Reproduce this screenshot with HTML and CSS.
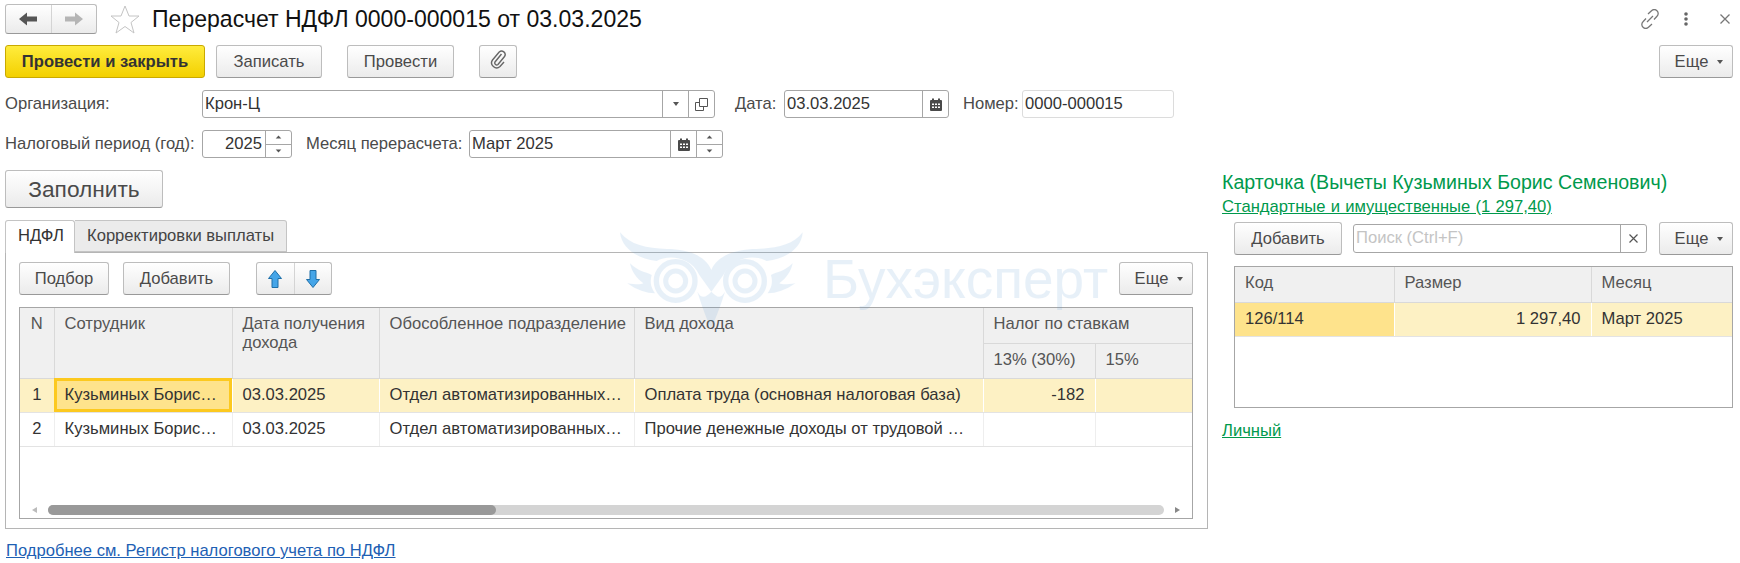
FILE: index.html
```html
<!DOCTYPE html>
<html lang="ru">
<head>
    <meta charset="UTF-8">
    <title>Перерасчет НДФЛ 0000-000015 от 03.03.2025</title>
    <link rel="stylesheet" href="styles.css">
</head>
<body>
    <svg class="defs" width="0" height="0">
        <symbol id="cal" viewBox="0 0 12 13">
            <path d="M1 2h1V0.500h2V2h4V0.500h2V2h1a1 1 0 0 1 1 1v9a1 1 0 0 1-1 1H1a1 1 0 0 1-1-1V3a1 1 0 0 1 1-1z" fill="#4a4a4a"/>
            <path d="M2 5.500h2v1.500H2zM5 5.500h2v1.500H5zM8 5.500h2v1.500H8zM2 8.500h2V10H2zM5 8.500h2V10H5zM8 8.500h2V10H8z" fill="#fff"/>
        </symbol>
        <symbol id="up" viewBox="0 0 8 5"><path d="M4 0.500L7.500 4.500H0.500z" fill="#555"/></symbol>
        <symbol id="down" viewBox="0 0 8 5"><path d="M4 4.500L0.500 0.500H7.500z" fill="#555"/></symbol>
    </svg>

    <!-- watermark lies over the form -->
    <div class="watermark">
        <svg class="owl" width="210" height="110" viewBox="0 0 630 330">
            <g fill="#5b9bd5">
                <path d="M30 22C60 60 110 70 170 72C230 72 285 90 304 135C323 90 380 72 440 72C500 70 550 60 578 22C575 70 530 100 470 108C440 90 370 90 340 150L304 200L268 150C240 90 170 90 140 108C80 100 35 70 30 22z"/>
                <path id="wing" d="M60 115C85 140 105 140 125 150C118 175 125 190 135 205C110 205 80 195 52 175C75 178 90 180 100 175C80 160 65 140 60 115z"/>
                <path transform="translate(608,0) scale(-1,1)" d="M60 115C85 140 105 140 125 150C118 175 125 190 135 205C110 205 80 195 52 175C75 178 90 180 100 175C80 160 65 140 60 115z"/>
                <path d="M262 200C275 240 285 270 303 310C322 270 332 240 345 200C330 225 320 215 304 200C290 215 275 225 262 200z"/>
            </g>
            <g fill="none" stroke="#5b9bd5">
                <circle cx="197" cy="168" r="30" stroke-width="15"/>
                <circle cx="405" cy="168" r="30" stroke-width="15"/>
                <circle cx="197" cy="168" r="58" stroke-width="16"/>
                <circle cx="405" cy="168" r="58" stroke-width="16"/>
            </g>
        </svg>
        <span class="watermark-text">Бухэксперт</span>
    </div>

    <div class="page">
        <header class="titlebar">
            <div class="nav-group">
                <button class="nav-btn">
                    <svg width="18" height="14" viewBox="0 0 18 14"><path d="M0 7L8 0.500V4.500H18V9.500H8V13.500z" fill="#555"/></svg>
                </button>
                <button class="nav-btn">
                    <svg width="18" height="14" viewBox="0 0 18 14"><path d="M18 7L10 0.500V4.500H0V9.500H10V13.500z" fill="#b5b5b5"/></svg>
                </button>
            </div>
            <svg class="star" width="30" height="29" viewBox="0 0 30 29"><path d="M15 1L19 11H29L21 17.500L24 28L15 21.500L6 28L9 17.500L1 11H11z" fill="#fff" stroke="#c4c4c4"/></svg>
            <h1 class="doc-title">Перерасчет НДФЛ 0000-000015 от 03.03.2025</h1>
            <div class="window-icons">
                <svg width="20" height="20" viewBox="0 0 20 20"><path d="M8 5L11.500 1.800a3.600 3.600 0 0 1 5.500 0a3.800 3.800 0 0 1 0 5.500L14 10.500M12 15L8.500 18.200a3.600 3.600 0 0 1-5.500 0a3.800 3.800 0 0 1 0-5.500L6 9.500M7 13L13 7" fill="none" stroke="#777" stroke-width="1.300"/></svg>
                <svg class="dots" width="6" height="14" viewBox="0 0 6 14"><circle cx="3" cy="2" r="1.800" fill="#666"/><circle cx="3" cy="7" r="1.800" fill="#666"/><circle cx="3" cy="12" r="1.800" fill="#666"/></svg>
                <svg width="10" height="10" viewBox="0 0 10 10"><path d="M0.500 0.500L9.500 9.500M9.500 0.500L0.500 9.500" stroke="#777" stroke-width="1.300"/></svg>
            </div>
        </header>

        <div class="commands">
            <button class="btn btn-primary">Провести и закрыть</button>
            <button class="btn btn-save">Записать</button>
            <button class="btn btn-post">Провести</button>
            <button class="btn btn-clip">
                <svg width="18" height="20" viewBox="0 0 18 20"><path d="M12.500 5L6 13a2 2 0 0 0 3 2.500L15.500 7.500a3.500 3.500 0 0 0-5.300-4.500L3.500 11a5 5 0 0 0 7.500 6.500L15 13" fill="none" stroke="#666" stroke-width="1.400"/></svg>
            </button>
            <button class="btn btn-more">Еще<i class="caret"></i></button>
        </div>

        <div class="form-row">
            <label class="lbl lbl-org">Организация:</label>
            <div class="field field-org">
                <span class="field-val">Крон-Ц</span>
                <span class="field-btn"><i class="caret"></i></span>
                <span class="field-btn">
                    <svg width="13" height="13" viewBox="0 0 13 13"><path d="M4.500 0.500H12.500V8.500H4.500zM4.500 4.500H0.500V12.500H8.500V8.500" fill="none" stroke="#555"/></svg>
                </span>
            </div>
            <label class="lbl lbl-date">Дата:</label>
            <div class="field field-date">
                <span class="field-val">03.03.2025</span>
                <span class="field-btn"><svg width="12" height="13"><use href="#cal"/></svg></span>
            </div>
            <label class="lbl lbl-num">Номер:</label>
            <div class="field field-num"><span class="field-val">0000-000015</span></div>
        </div>

        <div class="form-row form-row-2">
            <label class="lbl lbl-year">Налоговый период (год):</label>
            <div class="field field-year">
                <span class="field-val right">2025</span>
                <span class="spin"><b><svg width="7" height="4"><use href="#up"/></svg></b><b><svg width="7" height="4"><use href="#down"/></svg></b></span>
            </div>
            <label class="lbl lbl-month">Месяц перерасчета:</label>
            <div class="field field-month">
                <span class="field-val">Март 2025</span>
                <span class="field-btn"><svg width="12" height="13"><use href="#cal"/></svg></span>
                <span class="spin"><b><svg width="7" height="4"><use href="#up"/></svg></b><b><svg width="7" height="4"><use href="#down"/></svg></b></span>
            </div>
        </div>

        <div class="columns">
            <main class="left">
                <button class="btn btn-fill">Заполнить</button>
                <div class="tabs">
                    <span class="tab tab-active">НДФЛ</span>
                    <span class="tab">Корректировки выплаты</span>
                </div>
                <section class="panel">
                    <div class="toolbar">
                        <button class="btn btn-pick">Подбор</button>
                        <button class="btn btn-add">Добавить</button>
                        <div class="arrows">
                            <button class="arrow-btn">
                                <svg width="14" height="18" viewBox="0 0 14 18"><path d="M7 0.500L13.500 8.500H10V17.500H4V8.500H0.500z" fill="#45a5e8" stroke="#1f6fa8"/></svg>
                            </button>
                            <button class="arrow-btn">
                                <svg width="14" height="18" viewBox="0 0 14 18"><path d="M7 17.500L0.500 9.500H4V0.500H10V9.500H13.500z" fill="#45a5e8" stroke="#1f6fa8"/></svg>
                            </button>
                        </div>
                        <button class="btn btn-more">Еще<i class="caret"></i></button>
                    </div>

                    <div class="grid">
                        <table class="tbl tbl-main">
                            <colgroup>
                                <col class="c-n"><col class="c-emp"><col class="c-date"><col class="c-dep"><col class="c-kind"><col class="c-r13"><col class="c-r15">
                            </colgroup>
                            <thead>
                                <tr>
                                    <th rowspan="2" class="center">N</th>
                                    <th rowspan="2">Сотрудник</th>
                                    <th rowspan="2">Дата получения дохода</th>
                                    <th rowspan="2" class="nowrap">Обособленное подразделение</th>
                                    <th rowspan="2">Вид дохода</th>
                                    <th colspan="2">Налог по ставкам</th>
                                </tr>
                                <tr>
                                    <th>13% (30%)</th>
                                    <th>15%</th>
                                </tr>
                            </thead>
                            <tbody>
                                <tr class="selected">
                                    <td class="center">1</td>
                                    <td class="focus">Кузьминых Борис…</td>
                                    <td>03.03.2025</td>
                                    <td>Отдел автоматизированных…</td>
                                    <td>Оплата труда (основная налоговая база)</td>
                                    <td class="right">-182</td>
                                    <td></td>
                                </tr>
                                <tr>
                                    <td class="center">2</td>
                                    <td>Кузьминых Борис…</td>
                                    <td>03.03.2025</td>
                                    <td>Отдел автоматизированных…</td>
                                    <td>Прочие денежные доходы от трудовой …</td>
                                    <td></td>
                                    <td></td>
                                </tr>
                            </tbody>
                        </table>
                        <div class="scrollbar">
                            <i class="sb-left"></i>
                            <div class="sb-track"><div class="sb-thumb"></div></div>
                            <i class="sb-right"></i>
                        </div>
                    </div>
                </section>
                <a class="doc-link" href="#">Подробнее см. Регистр налогового учета по НДФЛ</a>
            </main>

            <aside class="right-col">
                <div class="card-title">Карточка (Вычеты Кузьминых Борис Семенович)</div>
                <a class="green-link" href="#">Стандартные и имущественные (1 297,40)</a>
                <div class="card-body">
                    <div class="card-tools">
                        <button class="btn btn-add-card">Добавить</button>
                        <div class="field field-search">
                            <span class="field-val placeholder">Поиск (Ctrl+F)</span>
                            <span class="field-btn">
                                <svg width="9" height="9" viewBox="0 0 9 9"><path d="M0.500 0.500L8.500 8.500M8.500 0.500L0.500 8.500" stroke="#555" stroke-width="1.200"/></svg>
                            </span>
                        </div>
                        <button class="btn btn-more">Еще<i class="caret"></i></button>
                    </div>
                    <div class="grid grid-card">
                        <table class="tbl tbl-card">
                            <colgroup><col class="c-code"><col class="c-size"><col class="c-month"></colgroup>
                            <thead>
                                <tr><th>Код</th><th>Размер</th><th>Месяц</th></tr>
                            </thead>
                            <tbody>
                                <tr class="selected">
                                    <td class="focus-plain">126/114</td>
                                    <td class="right">1 297,40</td>
                                    <td>Март 2025</td>
                                </tr>
                            </tbody>
                        </table>
                    </div>
                </div>
                <a class="green-link personal" href="#">Личный</a>
            </aside>
        </div>
    </div>
</body>
</html>
```

FILE: styles.css
```css
* {
    box-sizing: border-box;
}
html, body {
    height: 100%;
}
body {
    margin: 0;
    background-color: #fff;
    font-family: "Liberation Sans", Arial, sans-serif;
    font-size: 16.6px;
    color: #4a4a4a;
    overflow: hidden;
    position: relative;
}
.defs {
    position: absolute;
}
button {
    font: inherit;
    color: inherit;
}
.page {
    padding: 4px 7px 0 5px;
}

/* title */
.titlebar {
    display: flex;
    align-items: center;
    height: 30px;
}
.nav-group {
    display: flex;
    width: 92px;
    height: 30px;
    border: 1px solid #bdbdbd;
    border-bottom-color: #999;
    border-radius: 3px;
    background: linear-gradient(#fff, #ebebeb);
}
.nav-btn {
    flex: 1;
    display: flex;
    align-items: center;
    justify-content: center;
    border: none;
    padding: 0;
    background: none;
}
.nav-btn + .nav-btn {
    border-left: 1px solid #d4d4d4;
}
.star {
    margin-left: 13px;
}
.doc-title {
    margin: 0 0 0 12px;
    font-size: 23.050px;
    font-weight: normal;
    color: #111;
}
.window-icons {
    margin-left: auto;
    display: flex;
    align-items: center;
    gap: 23px;
    padding-right: 3px;
}
.dots {
    margin-right: 8px;
}

/* buttons */
.btn {
    height: 33px;
    padding: 0;
    border: 1px solid #bdbdbd;
    border-bottom-color: #999;
    border-radius: 3px;
    background: linear-gradient(#fff, #ebebeb);
    color: #4a4a4a;
    white-space: nowrap;
}
.btn-primary {
    width: 200px;
    border-color: #c9a900;
    background: linear-gradient(#ffec3d, #f3d000);
    color: #333;
    font-weight: bold;
}
.btn-save {
    width: 106px;
    margin-left: 11px;
}
.btn-post {
    width: 107px;
    margin-left: 25px;
}
.btn-clip {
    width: 38px;
    margin-left: 25px;
}
.btn-more {
    width: 74px;
    margin-left: auto;
    padding-left: 6px;
}
.caret {
    display: inline-block;
    margin-left: 9px;
    vertical-align: middle;
    border-left: 3.500px solid transparent;
    border-right: 3.500px solid transparent;
    border-top: 4px solid #555;
}
.commands {
    display: flex;
    margin-top: 11px;
}

/* form fields */
.form-row {
    display: flex;
    align-items: center;
    margin-top: 12px;
    height: 28px;
}
.lbl {
    white-space: nowrap;
}
.lbl-org, .lbl-year {
    width: 197px;
}
.lbl-date {
    margin-left: 20px;
    width: 49px;
}
.lbl-num {
    margin-left: 14px;
    width: 59px;
}
.lbl-month {
    margin-left: 14px;
    width: 163px;
}
.field {
    display: flex;
    height: 28px;
    border: 1px solid #a6a6a6;
    border-radius: 3px;
    background-color: #fff;
    color: #333;
}
.field-val {
    flex: 1;
    min-width: 0;
    padding: 0 2px;
    line-height: 26px;
    white-space: nowrap;
    overflow: hidden;
}
.field-val.right {
    text-align: right;
    padding-right: 3px;
}
.field-btn {
    width: 26px;
    display: flex;
    align-items: center;
    justify-content: center;
    border-left: 1px solid #a6a6a6;
}
.field-btn .caret {
    margin: 0;
}
.spin {
    width: 26px;
    display: flex;
    flex-direction: column;
    border-left: 1px solid #a6a6a6;
}
.spin b {
    flex: 1;
    display: flex;
    align-items: center;
    justify-content: center;
}
.spin b + b {
    border-top: 1px solid #a6a6a6;
}
.field-org {
    width: 513px;
}
.field-date {
    width: 165px;
}
.field-num {
    width: 152px;
    border-color: #dcdcdc;
}
.field-year {
    width: 90px;
}
.field-month {
    width: 254px;
}

/* main part */
.columns {
    display: flex;
    margin-top: 12px;
}
.left {
    width: 1203px;
}
.btn-fill {
    display: block;
    width: 158px;
    height: 38px;
    font-size: 22.700px;
}
.tabs {
    display: flex;
    margin-top: 12px;
    height: 33px;
    position: relative;
    z-index: 1;
}
.tab {
    padding: 0 12px;
    line-height: 30px;
    height: 32px;
    border: 1px solid #c4c4c4;
    border-left: none;
    border-radius: 0 3px 0 0;
    background-color: #ebebeb;
    color: #444;
    white-space: nowrap;
}
.tab-active {
    width: 70px;
    height: 33px;
    border-left: 1px solid #c4c4c4;
    border-bottom: none;
    border-radius: 3px 3px 0 0;
    background-color: #fff;
    color: #333;
}
.panel {
    height: 277px;
    margin-top: -1px;
    padding: 9px 14px 9px 13px;
    border: 1px solid #b5b5b5;
}
.toolbar {
    display: flex;
}
.btn-pick {
    width: 90px;
}
.btn-add {
    width: 107px;
    margin-left: 14px;
}
.arrows {
    display: flex;
    width: 76px;
    height: 33px;
    margin-left: 26px;
    border: 1px solid #bdbdbd;
    border-bottom-color: #999;
    border-radius: 3px;
    background: linear-gradient(#fff, #ebebeb);
}
.arrow-btn {
    flex: 1;
    display: flex;
    align-items: center;
    justify-content: center;
    padding: 0;
    border: none;
    background: none;
}
.arrow-btn + .arrow-btn {
    border-left: 1px solid #d4d4d4;
}

/* tables */
.grid {
    display: flex;
    flex-direction: column;
    justify-content: space-between;
    height: 212px;
    margin-top: 12px;
    border: 1px solid #a6a6a6;
}
.tbl {
    width: 100%;
    table-layout: fixed;
    border-collapse: collapse;
}
.tbl th {
    height: 35px;
    padding: 6px 10px 0;
    vertical-align: top;
    text-align: left;
    font-weight: normal;
    line-height: 19px;
    background-color: #f0f0f0;
    color: #555;
    border-right: 1px solid #d9d9d9;
    border-bottom: 1px solid #d9d9d9;
}
.tbl th:last-child {
    border-right: none;
}
.tbl th.nowrap {
    white-space: nowrap;
    padding-right: 0;
}
.tbl td {
    height: 34px;
    padding: 0 10px;
    white-space: nowrap;
    color: #333;
    border-right: 1px solid #eee;
    border-bottom: 1px solid #e3e3e3;
}
.tbl td:last-child {
    border-right: none;
}
.tbl .center {
    text-align: center;
    padding: 6px 0 0;
}
.tbl td.center {
    padding: 0;
}
.tbl .right {
    text-align: right;
}
.selected td {
    background-color: #fdf1c4;
    border-right-color: #fff;
}
.selected td.focus {
    background-color: #fee38c;
    outline: 3px solid #fcc91f;
    outline-offset: -3px;
}
.selected td.focus-plain {
    background-color: #fee38c;
}
.c-n { width: 34px; }
.c-emp { width: 178px; }
.c-date { width: 147px; }
.c-dep { width: 255px; }
.c-kind { width: 349px; }
.c-r13 { width: 112px; }
.c-code { width: 159px; }
.c-size { width: 197px; }

.scrollbar {
    display: flex;
    align-items: center;
    height: 10px;
    margin-bottom: 3px;
    padding: 0 10px;
}
.sb-left, .sb-right {
    width: 0;
    height: 0;
    border-top: 3px solid transparent;
    border-bottom: 3px solid transparent;
}
.sb-left {
    border-right: 5px solid #bbb;
    margin-left: 2px;
}
.sb-right {
    border-left: 5px solid #888;
    margin-right: 2px;
}
.sb-track {
    flex: 1;
    height: 10px;
    margin: 0 11px;
    border-radius: 5px;
    background-color: #d4d4d4;
}
.sb-thumb {
    width: 448px;
    height: 10px;
    border-radius: 5px;
    background-color: #999;
}

.doc-link {
    display: inline-block;
    margin: 12px 0 0 1px;
    color: #1e5fb4;
}

/* right part */
.right-col {
    flex: 1;
    margin-left: 14px;
}
.card-title {
    height: 24px;
    line-height: 24px;
    font-size: 19.600px;
    color: #00994c;
}
.green-link {
    display: block;
    width: max-content;
    margin-top: 3px;
    color: #00994c;
    word-spacing: 0.600px;
}
.card-body {
    padding-left: 12px;
    margin-top: 5px;
}
.card-tools {
    display: flex;
    align-items: center;
}
.btn-add-card {
    width: 108px;
}
.field-search {
    width: 294px;
    height: 29px;
    margin-left: 11px;
}
.placeholder {
    color: #c4c4c4;
}
.grid-card {
    height: 142px;
    margin-top: 11px;
}
.personal {
    margin-top: 13px;
}

/* watermark */
.watermark {
    position: absolute;
    left: 610px;
    top: 225px;
    display: flex;
    align-items: flex-start;
    gap: 3px;
    opacity: 0.14;
    pointer-events: none;
}
.watermark-text {
    margin-top: 22px;
    font-size: 55px;
    color: #5b9bd5;
}
```
